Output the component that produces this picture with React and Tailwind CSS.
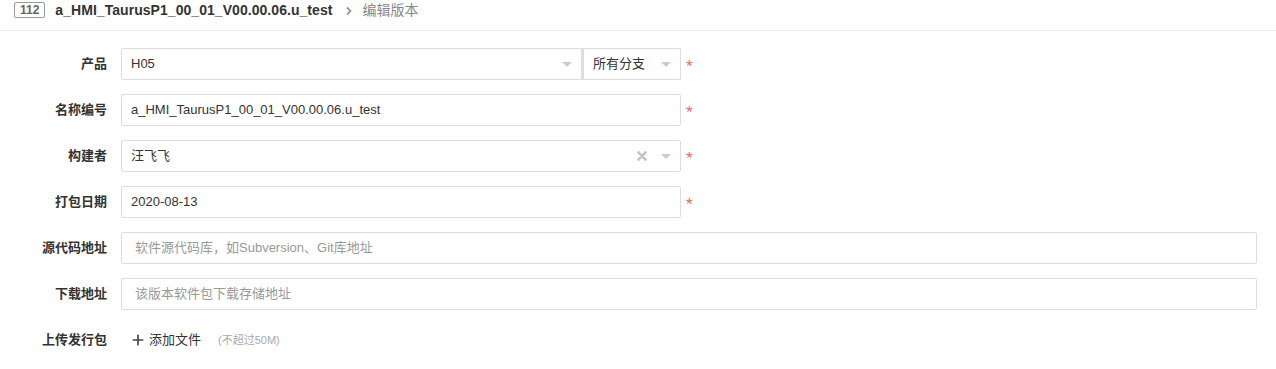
import { Plus } from 'lucide-react';

const font = { fontFamily: '"Liberation Sans", "Noto Sans CJK SC", sans-serif' };

function Caret() {
    return (
        <span className="w-0 h-0 border-l-[5px] border-r-[5px] border-t-[5px] border-l-transparent border-r-transparent border-t-[#ccc]" />
    );
}

function Star() {
    return <span className="ml-[5px] text-[#ff6060] text-[17px] leading-none mt-[5px]">*</span>;
}

function Row({ label, children }) {
    return (
        <div className="flex items-center h-[32px] mb-[14px]">
            <label className="w-[107px] text-right text-[13px] font-bold text-[#333] shrink-0">{label}</label>
            <div className="ml-[14px] flex items-center flex-1 min-w-0">{children}</div>
        </div>
    );
}

export default function App() {
    return (
        <div className="w-[1276px] h-[369px] bg-white overflow-hidden text-[#333]" style={font}>
            {/* Header */}
            <div className="h-[31px] border-b border-[#eee] flex items-start pt-[2px] pl-[14px]">
                <span className="h-[16px] px-[5px] border border-[#999] rounded-[2px] text-[12px] leading-[14px] text-[#666] font-bold">112</span>
                <span className="ml-[10px] text-[14px] font-bold text-[#333] leading-[17px] tracking-[0.05px]">a_HMI_TaurusP1_00_01_V00.00.06.u_test</span>
                <svg className="ml-[13px] mt-[4px]" width="8" height="10" viewBox="0 0 8 10">
                    <path d="M2 1.5 L5.5 5 L2 8.5" fill="none" stroke="#999" strokeWidth="1.8" />
                </svg>
                <span className="ml-[9px] text-[14px] text-[#888] leading-[17px]">编辑版本</span>
            </div>

            <div className="pt-[17px]">
                <Row label="产品">
                    <div className="flex w-[560px] h-[32px]">
                        <div className="w-[461px] h-full border border-[#ddd] rounded-l-[2px] flex items-center pl-[9px] pr-[9px] text-[13px]">
                            <span className="flex-1">H05</span>
                            <Caret />
                        </div>
                        <div className="w-[99px] h-full border border-[#ddd] border-l-[2px] rounded-r-[2px] flex items-center pl-[9px] pr-[9px] text-[13px]">
                            <span className="flex-1">所有分支</span>
                            <Caret />
                        </div>
                    </div>
                    <Star />
                </Row>
                <Row label="名称编号">
                    <div className="w-[560px] h-[32px] border border-[#ddd] rounded-[2px] flex items-center px-[9px] text-[13px]">
                        a_HMI_TaurusP1_00_01_V00.00.06.u_test
                    </div>
                    <Star />
                </Row>
                <Row label="构建者">
                    <div className="w-[560px] h-[32px] border border-[#ddd] rounded-[2px] flex items-center pl-[9px] pr-[9px] text-[13px]">
                        <span className="flex-1">汪飞飞</span>
                        <svg className="mr-[14px]" width="10" height="10" viewBox="0 0 10 10">
                            <path d="M1.5 1.5 L8.5 8.5 M8.5 1.5 L1.5 8.5" stroke="#c4c4c4" strokeWidth="2.6" strokeLinecap="round" />
                        </svg>
                        <Caret />
                    </div>
                    <Star />
                </Row>
                <Row label="打包日期">
                    <div className="w-[560px] h-[32px] border border-[#ddd] rounded-[2px] flex items-center px-[9px] text-[13px]">
                        2020-08-13
                    </div>
                    <Star />
                </Row>
                <Row label="源代码地址">
                    <div className="w-[1136px] h-[32px] border border-[#ddd] rounded-[2px] flex items-center px-[13px] text-[13px] text-[#999]">
                        软件源代码库，如Subversion、Git库地址
                    </div>
                </Row>
                <Row label="下载地址">
                    <div className="w-[1136px] h-[32px] border border-[#ddd] rounded-[2px] flex items-center px-[13px] text-[13px] text-[#999]">
                        该版本软件包下载存储地址
                    </div>
                </Row>
                <Row label="上传发行包">
                    <div className="flex items-center ml-[9px] text-[13px]">
                        <Plus size={16} strokeWidth={2.5} className="text-[#444]" />
                        <span className="ml-[3px] text-[#333]">添加文件</span>
                        <span className="ml-[17px] text-[11px] text-[#aaa]">(不超过50M)</span>
                    </div>
                </Row>
            </div>
        </div>
    );
}
